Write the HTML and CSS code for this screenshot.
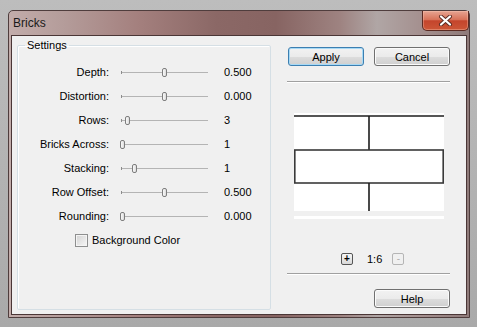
FILE: index.html
```html
<!DOCTYPE html>
<html lang="en">
<head>
    <meta charset="UTF-8">
    <meta name="viewport" content="width=device-width, initial-scale=1.0">
    <title>Bricks</title>
    <link rel="stylesheet" href="styles.css">
</head>
<body>
    <div class="window">
        <div class="titlebar">
            <span class="title">Bricks</span>
            <button class="close" type="button">
                <svg width="15" height="11" viewBox="0 0 15 11">
                    <path d="M3 1.5 L12 9.5 M12 1.5 L3 9.5" stroke="#5a2a22" stroke-width="4" stroke-linecap="round"/>
                    <path d="M3 1.5 L12 9.5 M12 1.5 L3 9.5" stroke="#fff" stroke-width="2.2" stroke-linecap="round"/>
                </svg>
            </button>
        </div>
        <div class="client">
            <fieldset class="settings">
                <legend>Settings</legend>
                <div class="rows">
                    <span class="name">Depth:</span>
                    <div class="track"><span class="thumb" style="left: 41px"></span></div>
                    <span class="value">0.500</span>

                    <span class="name">Distortion:</span>
                    <div class="track"><span class="thumb" style="left: 41px"></span></div>
                    <span class="value">0.000</span>

                    <span class="name">Rows:</span>
                    <div class="track"><span class="thumb" style="left: 4px"></span></div>
                    <span class="value">3</span>

                    <span class="name">Bricks Across:</span>
                    <div class="track"><span class="thumb" style="left: -1px"></span></div>
                    <span class="value">1</span>

                    <span class="name">Stacking:</span>
                    <div class="track"><span class="thumb" style="left: 11px"></span></div>
                    <span class="value">1</span>

                    <span class="name">Row Offset:</span>
                    <div class="track"><span class="thumb" style="left: 41px"></span></div>
                    <span class="value">0.500</span>

                    <span class="name">Rounding:</span>
                    <div class="track"><span class="thumb" style="left: -1px"></span></div>
                    <span class="value">0.000</span>
                </div>
                <label class="check"><span class="box"></span>Background Color</label>
            </fieldset>

            <div class="side">
                <div class="btn-row">
                    <button class="btn default" type="button">Apply</button>
                    <button class="btn" type="button">Cancel</button>
                </div>
                <div class="sep"></div>

                <!-- preview of the brick pattern -->
                <svg class="preview" width="150" height="106" viewBox="0 0 150 106">
                    <rect x="0" y="0" width="150" height="98" fill="#fff"/>
                    <line x1="0" y1="3" x2="150" y2="3" stroke="#1c1c1c" stroke-width="1.5"/>
                    <line x1="75" y1="3" x2="75" y2="37" stroke="#1c1c1c" stroke-width="1.6"/>
                    <rect x="0.8" y="37" width="148.4" height="33" fill="none" stroke="#3a3a3a" stroke-width="1.6"/>
                    <line x1="75" y1="70" x2="75" y2="98" stroke="#1c1c1c" stroke-width="1.6"/>
                    <rect x="0" y="103" width="150" height="3" fill="#fff"/>
                </svg>

                <div class="zoom">
                    <span class="zbtn">+</span>
                    <span class="ratio">1:6</span>
                    <span class="zbtn off">-</span>
                </div>
                <div class="sep sep-low"></div>
                <button class="btn help" type="button">Help</button>
            </div>
        </div>
    </div>
</body>
</html>
```

FILE: styles.css
```css
/* dialog */
body {
    font-family: "Liberation Sans", Arial, sans-serif;
    font-size: 11px;
    background: linear-gradient(to bottom, #bdbdbd, #a9a9a9);
    margin: 0;
    padding: 0;
    width: 477px;
    height: 327px;
    overflow: hidden;
}
.window {
    margin: 10px 0 0 8px;
    width: 462px;
    height: 308px;
    box-sizing: border-box;
    border: 1px solid #4f3d3d;
    border-radius: 5px 5px 0 0;
    padding: 0 2px 2px 2px;
    display: flex;
    flex-direction: column;
    background: linear-gradient(to right, #c2acaa 0%, #b49c9a 12%, #a4807e 28%, #8b6866 45%, #876462 58%, #9e8381 72%, #b0a6a5 80%, #a48f8e 90%, #8f7b7a 100%);
}
.titlebar {
    height: 24px;
    display: flex;
    align-items: flex-start;
    justify-content: space-between;
    margin-right: -2px;
}
.title {
    padding: 5px 0 0 2px;
    font-size: 12px;
    color: #1a1a1a;
}
.close {
    width: 47px;
    height: 20px;
    border: 1px solid #5b2a22;
    border-top: none;
    border-radius: 0 0 5px 5px;
    background: linear-gradient(to bottom, #e6a492 0%, #d8735a 45%, #c4452c 52%, #cc5637 100%);
    box-shadow: inset 0 0 0 1px rgba(255, 210, 190, 0.35);
    padding: 0;
    display: flex;
    align-items: center;
    justify-content: center;
}
.client {
    flex: 1;
    border: 1px solid #4a3636;
    background-color: #f0f0f0;
    display: flex;
    align-items: flex-start;
}

/* settings group */
.settings {
    margin: 3px 0 0 5px;
    width: 254px;
    height: 271px;
    box-sizing: border-box;
    padding: 0;
    border: 1px solid #d5dfe5;
    border-radius: 2px;
    box-shadow: inset 1px 1px 0 #fff;
}
.settings legend {
    margin-left: 7px;
    padding: 0 2px;
    line-height: 13px;
    color: #000;
}
.rows {
    margin-top: 8px;
    display: grid;
    grid-template-columns: 103px 103px auto;
    grid-auto-rows: 24px;
    align-items: center;
}
.name {
    text-align: right;
    padding-right: 12px;
    white-space: nowrap;
}
.track {
    position: relative;
    width: 87px;
    height: 24px;
}
.track::before {
    content: "";
    position: absolute;
    left: 0;
    right: 0;
    top: 12px;
    height: 1px;
    background-color: #b4b4b4;
}
.track::after {
    content: "";
    position: absolute;
    left: 0;
    top: 11px;
    width: 1px;
    height: 3px;
    background-color: #8c8c8c;
}
.thumb {
    position: absolute;
    top: 8px;
    width: 3px;
    height: 7px;
    border: 1px solid #7e7e7e;
    border-radius: 2px;
    background: linear-gradient(to right, #fafafa, #dcdcdc);
    z-index: 1;
}
.value {
    padding-left: 0;
}
.check {
    display: flex;
    align-items: center;
    height: 24px;
    padding-left: 57px;
}
.box {
    width: 11px;
    height: 11px;
    border: 1px solid #8e8f8f;
    background: linear-gradient(135deg, #d2d2d2, #f7f7f7);
    box-shadow: inset 0 0 0 1px #f4f4f4;
    margin-right: 4px;
}

/* right column */
.side {
    margin-left: 17px;
    width: 162px;
    padding-top: 11px;
    display: flex;
    flex-direction: column;
}
.btn-row {
    display: flex;
    gap: 10px;
}
.btn {
    width: 76px;
    height: 19px;
    padding: 0;
    border: 1px solid #707070;
    border-radius: 3px;
    background: linear-gradient(to bottom, #f2f2f2 0%, #ebebeb 50%, #dddddd 51%, #cfcfcf 100%);
    box-shadow: inset 0 0 0 1px #fbfbfb;
    font-family: "Liberation Sans", Arial, sans-serif;
    font-size: 11px;
    color: #000;
    cursor: pointer;
}
.btn.default {
    border-color: #3c7fb1;
    box-shadow: inset 0 0 0 1px #a7d9f5;
}
.sep {
    margin-top: 15px;
    margin-left: -1px;
    border-top: 1px solid #a0a0a0;
    border-bottom: 1px solid #fff;
}
.preview {
    display: block;
    margin: 30px 0 0 6px;
}
.zoom {
    margin-top: 34px;
    padding-left: 53px;
    display: flex;
    align-items: center;
    height: 12px;
}
.zbtn {
    width: 10px;
    height: 10px;
    border: 1px solid #555;
    border-radius: 2px;
    background: linear-gradient(to bottom, #f6f6f6, #d8d8d8);
    font-size: 10px;
    font-weight: bold;
    line-height: 9px;
    text-align: center;
    color: #000;
}
.zbtn.off {
    border-color: #b5b5b5;
    color: #b0b0b0;
    font-weight: normal;
    background: #f0f0f0;
}
.ratio {
    margin: 0 10px 0 14px;
}
.sep-low {
    margin-top: 8px;
}
.help {
    margin-top: 14px;
    align-self: flex-end;
}
```
